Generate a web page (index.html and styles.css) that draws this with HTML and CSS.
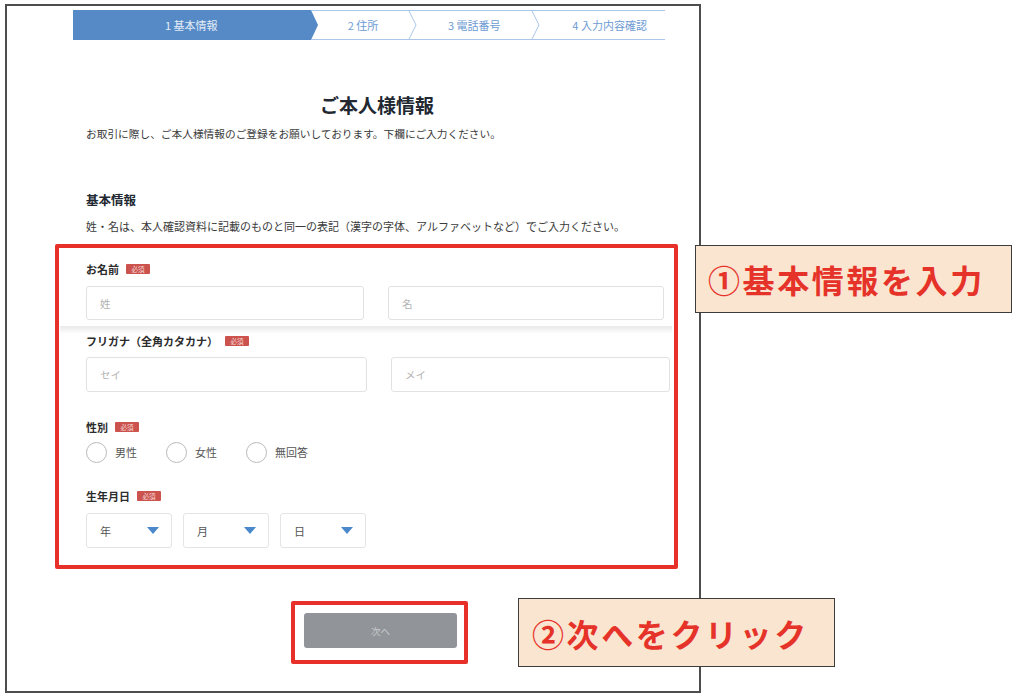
FILE: index.html
```html
<!DOCTYPE html>
<html lang="ja">
<head>
<meta charset="utf-8">
<title>ご本人様情報</title>
<link rel="stylesheet" href="styles.css">
</head>
<body>
<div class="shot">
  <div class="frame">
    <div class="stepper">
      <div class="step step-active">1 基本情報</div>
      <svg class="sep" width="8" height="30" viewBox="0 0 8 30"><polygon points="0,0 1,0 8,15 1,30 0,30" fill="#568ac7"/><line x1="1" y1="0.5" x2="8" y2="0.5" stroke="#aac6e8"/><line x1="1" y1="29.5" x2="8" y2="29.5" stroke="#aac6e8"/></svg>
      <div class="step step-2">2 住所</div>
      <svg class="sep" width="9" height="30" viewBox="0 0 9 30"><line x1="0" y1="0.5" x2="9" y2="0.5" stroke="#aac6e8"/><line x1="0" y1="29.5" x2="9" y2="29.5" stroke="#aac6e8"/><polyline points="0.5,0 8,15 0.5,30" fill="none" stroke="#aac6e8"/></svg>
      <div class="step step-3">3 電話番号</div>
      <svg class="sep" width="9" height="30" viewBox="0 0 9 30"><line x1="0" y1="0.5" x2="9" y2="0.5" stroke="#aac6e8"/><line x1="0" y1="29.5" x2="9" y2="29.5" stroke="#aac6e8"/><polyline points="0.5,0 8,15 0.5,30" fill="none" stroke="#aac6e8"/></svg>
      <div class="step step-4">4 入力内容確認</div>
    </div>

    <div class="form">
      <h1 class="title">ご本人様情報</h1>
      <p class="lead">お取引に際し、ご本人様情報のご登録をお願いしております。下欄にご入力ください。</p>

      <h2 class="section-title">基本情報</h2>
      <p class="lead lead-note">姓・名は、本人確認資料に記載のものと同一の表記（漢字の字体、アルファベットなど）でご入力ください。</p>

      <div class="field field-name">
        <div class="label">お名前<span class="badge">必須</span></div>
        <div class="pair">
          <div class="input">姓</div>
          <div class="input">名</div>
        </div>
      </div>

      <div class="field field-kana">
        <div class="label">フリガナ（全角カタカナ）<span class="badge">必須</span></div>
        <div class="pair pair-kana">
          <div class="input input-tall">セイ</div>
          <div class="input input-tall">メイ</div>
        </div>
      </div>

      <div class="field field-gender">
        <div class="label">性別<span class="badge">必須</span></div>
        <div class="radios">
          <div class="radio"><span class="circle"></span>男性</div>
          <div class="radio"><span class="circle"></span>女性</div>
          <div class="radio"><span class="circle"></span>無回答</div>
        </div>
      </div>

      <div class="field field-birth">
        <div class="label">生年月日<span class="badge">必須</span></div>
        <div class="selects">
          <div class="select"><span>年</span><svg width="12" height="7" viewBox="0 0 12 7"><polygon points="0,0 12,0 6,7" fill="#4b88cb"/></svg></div>
          <div class="select"><span>月</span><svg width="12" height="7" viewBox="0 0 12 7"><polygon points="0,0 12,0 6,7" fill="#4b88cb"/></svg></div>
          <div class="select"><span>日</span><svg width="12" height="7" viewBox="0 0 12 7"><polygon points="0,0 12,0 6,7" fill="#4b88cb"/></svg></div>
        </div>
      </div>

      <div class="actions">
        <div class="btn-next">次へ</div>
      </div>
    </div>
  </div>

  <div class="mark mark-form"></div>
  <div class="mark mark-btn"></div>
  <div class="callout callout-1">①基本情報を入力</div>
  <div class="callout callout-2">②次へをクリック</div>
</div>
</body>
</html>
```

FILE: styles.css
```css
* { box-sizing: border-box; }

html, body {
  margin: 0;
  padding: 0;
  background: #ffffff;
}

body {
  font-family: "Noto Sans CJK JP", "Noto Sans", sans-serif;
  color: #333;
}

.shot {
  position: relative;
  width: 1024px;
  height: 696px;
  overflow: hidden;
  padding-top: 4px;
  padding-left: 5px;
}

.frame {
  width: 696px;
  height: 689px;
  border: 2px solid #4d4d4d;
  overflow: hidden;
}

/* stepper */
.stepper {
  display: flex;
  margin: 4px 0 0 66px;
  width: 592px;
  height: 30px;
}

.step {
  height: 30px;
  display: flex;
  align-items: center;
  justify-content: center;
  font-size: 11px;
  color: #6e9bd3;
  border-top: 1px solid #aac6e8;
  border-bottom: 1px solid #aac6e8;
  white-space: nowrap;
}

.step-active {
  width: 237px;
  background: #568ac7;
  color: #e3ecf7;
  border: none;
}

.step-2 { width: 91px; }
.step-3 { width: 114px; }
.step-4 { width: 125px; padding-left: 14px; }

.sep { display: block; flex: none; }

/* form */
.form {
  margin-left: 79px;
  width: 582px;
}

.title {
  margin: 53px 0 0;
  text-align: center;
  font-size: 19px;
  line-height: 24px;
  font-weight: 700;
  color: #222831;
}

.lead {
  margin: 9px 0 0;
  font-size: 10.7px;
  line-height: 16px;
  color: #3a3a3a;
}

.section-title {
  margin: 49px 0 0;
  font-size: 12.5px;
  line-height: 18px;
  font-weight: 700;
  color: #222831;
}

.lead-note { font-size: 11px; }

.field { margin-top: 27px; }

.label {
  display: flex;
  align-items: center;
  height: 16px;
  font-size: 11px;
  font-weight: 700;
  color: #2c2c2c;
}

.badge {
  display: inline-flex;
  align-items: center;
  justify-content: center;
  margin-left: 7px;
  width: 24px;
  height: 10px;
  background: #cc534d;
  color: #f5dcdb;
  font-size: 6.5px;
  font-weight: 400;
  border-radius: 1px;
}

.field-name {
  position: relative;
  padding-bottom: 10px;
}

.field-name::after {
  content: "";
  position: absolute;
  left: -26px;
  right: -4px;
  bottom: -4px;
  height: 8px;
  background: linear-gradient(#e9e9e9, rgba(255,255,255,0));
}

.pair {
  display: grid;
  grid-template-columns: 278px 276px;
  column-gap: 24px;
  margin-top: 9px;
}

.pair-kana {
  grid-template-columns: 281px 279px;
  margin-top: 8px;
}

.input {
  height: 34px;
  border: 1px solid #e2e2e2;
  border-radius: 3px;
  display: flex;
  align-items: center;
  padding-left: 13px;
  font-size: 10.5px;
  color: #b3b3b3;
}

.input-tall { height: 35px; }

.field-kana { margin-top: 3px; }

.radios {
  display: flex;
  gap: 29px;
  margin-top: 6px;
  height: 22px;
}

.radio {
  display: flex;
  align-items: center;
  gap: 8px;
  font-size: 11px;
  color: #555;
}

.circle {
  width: 21px;
  height: 21px;
  border: 1px solid #b9b9b9;
  border-radius: 50%;
}

.field-gender { margin-top: 27px; }
.field-birth { margin-top: 25px; }

.selects {
  display: flex;
  gap: 11px;
  margin-top: 9px;
}

.select {
  width: 86px;
  height: 35px;
  border: 1px solid #e4e4e4;
  border-radius: 3px;
  display: flex;
  align-items: center;
  justify-content: space-between;
  padding: 0 12px 0 13px;
  font-size: 11px;
  color: #555;
}

.actions {
  display: flex;
  justify-content: center;
  margin-top: 65px;
  padding-left: 7px;
}

.btn-next {
  width: 153px;
  height: 35px;
  background: #919599;
  border-radius: 3px;
  display: flex;
  align-items: center;
  justify-content: center;
  font-size: 9.5px;
  color: #c9cccf;
}

/* annotations */
.mark {
  position: absolute;
  border: 4px solid #e8302a;
  border-radius: 2px;
}

.mark-form { left: 55px; top: 244px; width: 623px; height: 325px; }
.mark-btn { left: 291px; top: 601px; width: 177px; height: 63px; }

.callout {
  position: absolute;
  width: 317px;
  height: 68px;
  background: #fae5d1;
  border: 1.5px solid #3c3c3c;
  color: #e6332a;
  font-size: 32px;
  font-weight: 700;
  letter-spacing: 2.6px;
  display: flex;
  align-items: center;
  white-space: nowrap;
}

.callout-1 { left: 695px; top: 245px; padding-left: 12px; }
.callout-2 { left: 518px; top: 598px; padding-left: 13px; height: 69px; }
```
